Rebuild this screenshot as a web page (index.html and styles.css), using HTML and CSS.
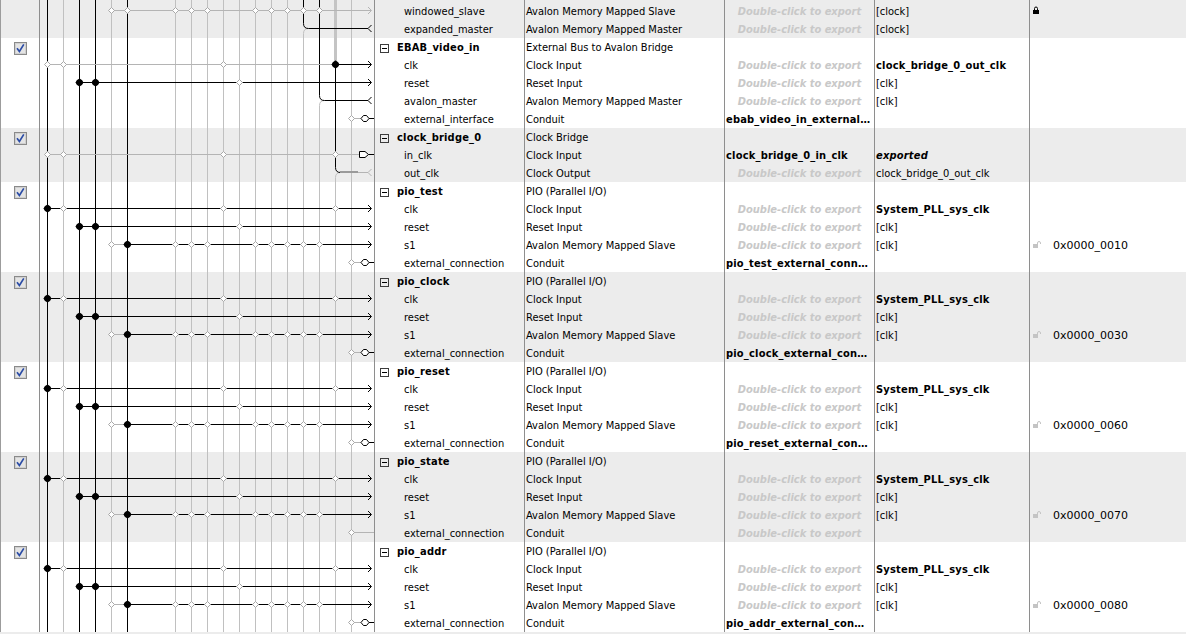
FILE: index.html
```html
<!DOCTYPE html>
<html>
<head>
<meta charset="utf-8">
<link rel="stylesheet" href="styles.css">
</head>
<body>
<div class="table">
  <div class="row g top"><div class="c chk"></div><div class="c conn"></div><div class="c name"></div><div class="c desc"></div><div class="c exp"></div><div class="c clk"></div><div class="c base"></div></div>

  <div class="row g"><div class="c chk"></div><div class="c conn"></div><div class="c name"><span class="sub">windowed_slave</span></div><div class="c desc">Avalon Memory Mapped Slave</div><div class="c exp"><span class="dce">Double-click to export</span></div><div class="c clk">[clock]</div><div class="c base"><svg class="lock" width="8" height="8" viewBox="0 0 8 8"><path d="M1.5,4 V2.5 A1.5,1.5 0 0 1 4.5,2.5 V4" fill="none" stroke="#000"/><rect x="0" y="4" width="6" height="4" fill="#000"/></svg></div></div>
  <div class="row g"><div class="c chk"></div><div class="c conn"></div><div class="c name"><span class="sub">expanded_master</span></div><div class="c desc">Avalon Memory Mapped Master</div><div class="c exp"><span class="dce">Double-click to export</span></div><div class="c clk">[clock]</div><div class="c base"></div></div>

  <div class="row"><div class="c chk"><svg class="cb" width="13" height="13" viewBox="0 0 13 13"><rect x="0.5" y="0.5" width="12" height="12" fill="#fff" stroke="#8a8a8a"/><rect x="1.5" y="1.5" width="10" height="10" fill="#e4e4e4" stroke="#d0d0d0"/><path d="M3,6.3 L5.4,9.4 L9.8,2.4" fill="none" stroke="#2b4ca6" stroke-width="1.7"/></svg></div><div class="c conn"></div><div class="c name"><span class="tog"></span><b>EBAB_video_in</b></div><div class="c desc">External Bus to Avalon Bridge</div><div class="c exp"></div><div class="c clk"></div><div class="c base"></div></div>
  <div class="row"><div class="c chk"></div><div class="c conn"></div><div class="c name"><span class="sub">clk</span></div><div class="c desc">Clock Input</div><div class="c exp"><span class="dce">Double-click to export</span></div><div class="c clk"><b>clock_bridge_0_out_clk</b></div><div class="c base"></div></div>
  <div class="row"><div class="c chk"></div><div class="c conn"></div><div class="c name"><span class="sub">reset</span></div><div class="c desc">Reset Input</div><div class="c exp"><span class="dce">Double-click to export</span></div><div class="c clk">[clk]</div><div class="c base"></div></div>
  <div class="row"><div class="c chk"></div><div class="c conn"></div><div class="c name"><span class="sub">avalon_master</span></div><div class="c desc">Avalon Memory Mapped Master</div><div class="c exp"><span class="dce">Double-click to export</span></div><div class="c clk">[clk]</div><div class="c base"></div></div>
  <div class="row"><div class="c chk"></div><div class="c conn"></div><div class="c name"><span class="sub">external_interface</span></div><div class="c desc">Conduit</div><div class="c exp"><b>ebab_video_in_external…</b></div><div class="c clk"></div><div class="c base"></div></div>

  <div class="row g"><div class="c chk"><svg class="cb" width="13" height="13" viewBox="0 0 13 13"><rect x="0.5" y="0.5" width="12" height="12" fill="#fff" stroke="#8a8a8a"/><rect x="1.5" y="1.5" width="10" height="10" fill="#e4e4e4" stroke="#d0d0d0"/><path d="M3,6.3 L5.4,9.4 L9.8,2.4" fill="none" stroke="#2b4ca6" stroke-width="1.7"/></svg></div><div class="c conn"></div><div class="c name"><span class="tog"></span><b>clock_bridge_0</b></div><div class="c desc">Clock Bridge</div><div class="c exp"></div><div class="c clk"></div><div class="c base"></div></div>
  <div class="row g"><div class="c chk"></div><div class="c conn"></div><div class="c name"><span class="sub">in_clk</span></div><div class="c desc">Clock Input</div><div class="c exp"><b>clock_bridge_0_in_clk</b></div><div class="c clk"><b><i>exported</i></b></div><div class="c base"></div></div>
  <div class="row g"><div class="c chk"></div><div class="c conn"></div><div class="c name"><span class="sub">out_clk</span></div><div class="c desc">Clock Output</div><div class="c exp"><span class="dce">Double-click to export</span></div><div class="c clk">clock_bridge_0_out_clk</div><div class="c base"></div></div>

  <div class="row"><div class="c chk"><svg class="cb" width="13" height="13" viewBox="0 0 13 13"><rect x="0.5" y="0.5" width="12" height="12" fill="#fff" stroke="#8a8a8a"/><rect x="1.5" y="1.5" width="10" height="10" fill="#e4e4e4" stroke="#d0d0d0"/><path d="M3,6.3 L5.4,9.4 L9.8,2.4" fill="none" stroke="#2b4ca6" stroke-width="1.7"/></svg></div><div class="c conn"></div><div class="c name"><span class="tog"></span><b>pio_test</b></div><div class="c desc">PIO (Parallel I/O)</div><div class="c exp"></div><div class="c clk"></div><div class="c base"></div></div>
  <div class="row"><div class="c chk"></div><div class="c conn"></div><div class="c name"><span class="sub">clk</span></div><div class="c desc">Clock Input</div><div class="c exp"><span class="dce">Double-click to export</span></div><div class="c clk"><b>System_PLL_sys_clk</b></div><div class="c base"></div></div>
  <div class="row"><div class="c chk"></div><div class="c conn"></div><div class="c name"><span class="sub">reset</span></div><div class="c desc">Reset Input</div><div class="c exp"><span class="dce">Double-click to export</span></div><div class="c clk">[clk]</div><div class="c base"></div></div>
  <div class="row"><div class="c chk"></div><div class="c conn"></div><div class="c name"><span class="sub">s1</span></div><div class="c desc">Avalon Memory Mapped Slave</div><div class="c exp"><span class="dce">Double-click to export</span></div><div class="c clk">[clk]</div><div class="c base"><svg class="ulock" width="8" height="7" viewBox="0 0 8 7"><path d="M4.5,3.5 V2 A1.5,1.5 0 0 1 7.5,2 V3" fill="none" stroke="#c4c4c4"/><rect x="0" y="3" width="5" height="4" fill="#c4c4c4"/></svg><span class="addr">0x0000_0010</span></div></div>
  <div class="row"><div class="c chk"></div><div class="c conn"></div><div class="c name"><span class="sub">external_connection</span></div><div class="c desc">Conduit</div><div class="c exp"><b>pio_test_external_conn…</b></div><div class="c clk"></div><div class="c base"></div></div>

  <div class="row g"><div class="c chk"><svg class="cb" width="13" height="13" viewBox="0 0 13 13"><rect x="0.5" y="0.5" width="12" height="12" fill="#fff" stroke="#8a8a8a"/><rect x="1.5" y="1.5" width="10" height="10" fill="#e4e4e4" stroke="#d0d0d0"/><path d="M3,6.3 L5.4,9.4 L9.8,2.4" fill="none" stroke="#2b4ca6" stroke-width="1.7"/></svg></div><div class="c conn"></div><div class="c name"><span class="tog"></span><b>pio_clock</b></div><div class="c desc">PIO (Parallel I/O)</div><div class="c exp"></div><div class="c clk"></div><div class="c base"></div></div>
  <div class="row g"><div class="c chk"></div><div class="c conn"></div><div class="c name"><span class="sub">clk</span></div><div class="c desc">Clock Input</div><div class="c exp"><span class="dce">Double-click to export</span></div><div class="c clk"><b>System_PLL_sys_clk</b></div><div class="c base"></div></div>
  <div class="row g"><div class="c chk"></div><div class="c conn"></div><div class="c name"><span class="sub">reset</span></div><div class="c desc">Reset Input</div><div class="c exp"><span class="dce">Double-click to export</span></div><div class="c clk">[clk]</div><div class="c base"></div></div>
  <div class="row g"><div class="c chk"></div><div class="c conn"></div><div class="c name"><span class="sub">s1</span></div><div class="c desc">Avalon Memory Mapped Slave</div><div class="c exp"><span class="dce">Double-click to export</span></div><div class="c clk">[clk]</div><div class="c base"><svg class="ulock" width="8" height="7" viewBox="0 0 8 7"><path d="M4.5,3.5 V2 A1.5,1.5 0 0 1 7.5,2 V3" fill="none" stroke="#c4c4c4"/><rect x="0" y="3" width="5" height="4" fill="#c4c4c4"/></svg><span class="addr">0x0000_0030</span></div></div>
  <div class="row g"><div class="c chk"></div><div class="c conn"></div><div class="c name"><span class="sub">external_connection</span></div><div class="c desc">Conduit</div><div class="c exp"><b>pio_clock_external_con…</b></div><div class="c clk"></div><div class="c base"></div></div>

  <div class="row"><div class="c chk"><svg class="cb" width="13" height="13" viewBox="0 0 13 13"><rect x="0.5" y="0.5" width="12" height="12" fill="#fff" stroke="#8a8a8a"/><rect x="1.5" y="1.5" width="10" height="10" fill="#e4e4e4" stroke="#d0d0d0"/><path d="M3,6.3 L5.4,9.4 L9.8,2.4" fill="none" stroke="#2b4ca6" stroke-width="1.7"/></svg></div><div class="c conn"></div><div class="c name"><span class="tog"></span><b>pio_reset</b></div><div class="c desc">PIO (Parallel I/O)</div><div class="c exp"></div><div class="c clk"></div><div class="c base"></div></div>
  <div class="row"><div class="c chk"></div><div class="c conn"></div><div class="c name"><span class="sub">clk</span></div><div class="c desc">Clock Input</div><div class="c exp"><span class="dce">Double-click to export</span></div><div class="c clk"><b>System_PLL_sys_clk</b></div><div class="c base"></div></div>
  <div class="row"><div class="c chk"></div><div class="c conn"></div><div class="c name"><span class="sub">reset</span></div><div class="c desc">Reset Input</div><div class="c exp"><span class="dce">Double-click to export</span></div><div class="c clk">[clk]</div><div class="c base"></div></div>
  <div class="row"><div class="c chk"></div><div class="c conn"></div><div class="c name"><span class="sub">s1</span></div><div class="c desc">Avalon Memory Mapped Slave</div><div class="c exp"><span class="dce">Double-click to export</span></div><div class="c clk">[clk]</div><div class="c base"><svg class="ulock" width="8" height="7" viewBox="0 0 8 7"><path d="M4.5,3.5 V2 A1.5,1.5 0 0 1 7.5,2 V3" fill="none" stroke="#c4c4c4"/><rect x="0" y="3" width="5" height="4" fill="#c4c4c4"/></svg><span class="addr">0x0000_0060</span></div></div>
  <div class="row"><div class="c chk"></div><div class="c conn"></div><div class="c name"><span class="sub">external_connection</span></div><div class="c desc">Conduit</div><div class="c exp"><b>pio_reset_external_con…</b></div><div class="c clk"></div><div class="c base"></div></div>

  <div class="row g"><div class="c chk"><svg class="cb" width="13" height="13" viewBox="0 0 13 13"><rect x="0.5" y="0.5" width="12" height="12" fill="#fff" stroke="#8a8a8a"/><rect x="1.5" y="1.5" width="10" height="10" fill="#e4e4e4" stroke="#d0d0d0"/><path d="M3,6.3 L5.4,9.4 L9.8,2.4" fill="none" stroke="#2b4ca6" stroke-width="1.7"/></svg></div><div class="c conn"></div><div class="c name"><span class="tog"></span><b>pio_state</b></div><div class="c desc">PIO (Parallel I/O)</div><div class="c exp"></div><div class="c clk"></div><div class="c base"></div></div>
  <div class="row g"><div class="c chk"></div><div class="c conn"></div><div class="c name"><span class="sub">clk</span></div><div class="c desc">Clock Input</div><div class="c exp"><span class="dce">Double-click to export</span></div><div class="c clk"><b>System_PLL_sys_clk</b></div><div class="c base"></div></div>
  <div class="row g"><div class="c chk"></div><div class="c conn"></div><div class="c name"><span class="sub">reset</span></div><div class="c desc">Reset Input</div><div class="c exp"><span class="dce">Double-click to export</span></div><div class="c clk">[clk]</div><div class="c base"></div></div>
  <div class="row g"><div class="c chk"></div><div class="c conn"></div><div class="c name"><span class="sub">s1</span></div><div class="c desc">Avalon Memory Mapped Slave</div><div class="c exp"><span class="dce">Double-click to export</span></div><div class="c clk">[clk]</div><div class="c base"><svg class="ulock" width="8" height="7" viewBox="0 0 8 7"><path d="M4.5,3.5 V2 A1.5,1.5 0 0 1 7.5,2 V3" fill="none" stroke="#c4c4c4"/><rect x="0" y="3" width="5" height="4" fill="#c4c4c4"/></svg><span class="addr">0x0000_0070</span></div></div>
  <div class="row g"><div class="c chk"></div><div class="c conn"></div><div class="c name"><span class="sub">external_connection</span></div><div class="c desc">Conduit</div><div class="c exp"><span class="dce">Double-click to export</span></div><div class="c clk"></div><div class="c base"></div></div>

  <div class="row"><div class="c chk"><svg class="cb" width="13" height="13" viewBox="0 0 13 13"><rect x="0.5" y="0.5" width="12" height="12" fill="#fff" stroke="#8a8a8a"/><rect x="1.5" y="1.5" width="10" height="10" fill="#e4e4e4" stroke="#d0d0d0"/><path d="M3,6.3 L5.4,9.4 L9.8,2.4" fill="none" stroke="#2b4ca6" stroke-width="1.7"/></svg></div><div class="c conn"></div><div class="c name"><span class="tog"></span><b>pio_addr</b></div><div class="c desc">PIO (Parallel I/O)</div><div class="c exp"></div><div class="c clk"></div><div class="c base"></div></div>
  <div class="row"><div class="c chk"></div><div class="c conn"></div><div class="c name"><span class="sub">clk</span></div><div class="c desc">Clock Input</div><div class="c exp"><span class="dce">Double-click to export</span></div><div class="c clk"><b>System_PLL_sys_clk</b></div><div class="c base"></div></div>
  <div class="row"><div class="c chk"></div><div class="c conn"></div><div class="c name"><span class="sub">reset</span></div><div class="c desc">Reset Input</div><div class="c exp"><span class="dce">Double-click to export</span></div><div class="c clk">[clk]</div><div class="c base"></div></div>
  <div class="row"><div class="c chk"></div><div class="c conn"></div><div class="c name"><span class="sub">s1</span></div><div class="c desc">Avalon Memory Mapped Slave</div><div class="c exp"><span class="dce">Double-click to export</span></div><div class="c clk">[clk]</div><div class="c base"><svg class="ulock" width="8" height="7" viewBox="0 0 8 7"><path d="M4.5,3.5 V2 A1.5,1.5 0 0 1 7.5,2 V3" fill="none" stroke="#c4c4c4"/><rect x="0" y="3" width="5" height="4" fill="#c4c4c4"/></svg><span class="addr">0x0000_0080</span></div></div>
  <div class="row"><div class="c chk"></div><div class="c conn"></div><div class="c name"><span class="sub">external_connection</span></div><div class="c desc">Conduit</div><div class="c exp"><b>pio_addr_external_con…</b></div><div class="c clk"></div><div class="c base"></div></div>

  <div class="row g bottom"></div>

  <svg class="wires" width="1186" height="632" viewBox="0 0 1186 632">
    <defs>
      <path id="hd" d="M0,-3L3,0L0,3L-3,0Z" fill="#fff" stroke="#a8a8a8"/>
      <g id="bd"><path d="M0,-4.2L4.2,0L0,4.2L-4.2,0Z" fill="#000"/><circle r="3.3" fill="#000"/></g>
      <path id="ra" d="M-3.5,-3.5L0,0L-3.5,3.5" fill="none"/>
      <path id="la" d="M3.5,-3.5L0,0L3.5,3.5" fill="none"/>
      <g id="cond"><path d="M351.5,0H361" stroke="#b4b4b4"/><path d="M361,0L363.5,-3H366.5L369,0L366.5,3H363.5Z" fill="#fff" stroke="#000"/><path d="M369,0H374" stroke="#000"/><use href="#hd" x="351.5" y="0"/></g>
      <g id="clkrow"><path d="M47.5,0H371" stroke="#000"/><use href="#ra" x="371.5" y="0" stroke="#000"/><use href="#bd" x="47.5" y="0"/><use href="#hd" x="63.5" y="0"/><use href="#hd" x="223.5" y="0"/><use href="#hd" x="335.5" y="0"/></g>
      <g id="rstrow"><path d="M79.5,0H371" stroke="#000"/><use href="#ra" x="371.5" y="0" stroke="#000"/><use href="#bd" x="79.5" y="0"/><use href="#bd" x="95.5" y="0"/><use href="#hd" x="239.5" y="0"/></g>
      <g id="s1row"><path d="M111.5,0H127.5" stroke="#b4b4b4"/><path d="M127.5,0H371" stroke="#000"/><use href="#ra" x="371.5" y="0" stroke="#000"/><use href="#hd" x="111.5" y="0"/><use href="#bd" x="127.5" y="0"/><use href="#hd" x="175.5" y="0"/><use href="#hd" x="191.5" y="0"/><use href="#hd" x="207.5" y="0"/><use href="#hd" x="255.5" y="0"/><use href="#hd" x="271.5" y="0"/><use href="#hd" x="287.5" y="0"/><use href="#hd" x="303.5" y="0"/><use href="#hd" x="319.5" y="0"/></g>
    </defs>

    <g stroke="#c0c0c0" fill="none">
      <path d="M63.5,0V632M111.5,0V632M175.5,0V632M191.5,0V632M207.5,0V632M223.5,0V632M239.5,0V632M255.5,0V632M271.5,0V632M287.5,0V632M351.5,0V632"/>
      <path d="M308.5,28.5Q303.5,28.5 303.5,33.5V632"/>
      <path d="M324.5,100.5Q319.5,100.5 319.5,105.5V632"/>
      <path d="M340.5,172.5Q335.5,172.5 335.5,177.5V632"/>
    </g>
    <rect x="334" y="0" width="3" height="64" fill="#c4c4c4"/>

    <g stroke="#000" fill="none">
      <path d="M47.5,0V632M79.5,0V632M95.5,0V632M127.5,0V632"/>
      <path d="M303.5,0V23.5Q303.5,28.5 308.5,28.5H368"/>
      <path d="M319.5,0V95.5Q319.5,100.5 324.5,100.5H368"/>
      <path d="M335.5,64.5V167.5Q335.5,172.5 340.5,172.5"/>
    </g>

    <!-- windowed_slave -->
    <path d="M111.5,10.5H371" stroke="#b4b4b4"/>
    <use href="#ra" x="371.5" y="10.5" stroke="#b4b4b4"/>
    <use href="#hd" x="111.5" y="10.5"/><use href="#hd" x="127.5" y="10.5"/><use href="#hd" x="175.5" y="10.5"/><use href="#hd" x="191.5" y="10.5"/><use href="#hd" x="207.5" y="10.5"/><use href="#hd" x="255.5" y="10.5"/><use href="#hd" x="271.5" y="10.5"/><use href="#hd" x="287.5" y="10.5"/><use href="#hd" x="303.5" y="10.5"/><use href="#hd" x="319.5" y="10.5"/>
    <!-- expanded_master -->
    <use href="#la" x="368" y="28.5" stroke="#000"/>
    <!-- EBAB clk -->
    <path d="M47.5,64.5H335.5" stroke="#b4b4b4"/>
    <path d="M335.5,64.5H371" stroke="#000"/>
    <use href="#ra" x="371.5" y="64.5" stroke="#000"/>
    <use href="#hd" x="47.5" y="64.5"/><use href="#hd" x="63.5" y="64.5"/><use href="#hd" x="223.5" y="64.5"/><use href="#bd" x="335.5" y="64.5"/>
    <!-- EBAB reset -->
    <use href="#rstrow" y="82.5"/>
    <!-- avalon_master -->
    <use href="#la" x="368" y="100.5" stroke="#000"/>
    <!-- external_interface -->
    <use href="#cond" y="118.5"/>
    <!-- in_clk -->
    <path d="M47.5,154.5H359.5" stroke="#b4b4b4"/>
    <use href="#hd" x="47.5" y="154.5"/><use href="#hd" x="63.5" y="154.5"/><use href="#hd" x="223.5" y="154.5"/><use href="#hd" x="335.5" y="154.5"/>
    <path d="M359.5,151.5H365L368.5,154.5L365,157.5H359.5Z" fill="#fff" stroke="#000"/>
    <path d="M368.5,154.5H374" stroke="#000"/>
    <!-- out_clk -->
    <path d="M340,172H358" stroke="#9a9a9a" stroke-width="2"/>
    <path d="M358,172.5H368" stroke="#b4b4b4"/>
    <use href="#la" x="368" y="172.5" stroke="#b4b4b4"/>

    <!-- pio_test -->
    <use href="#clkrow" y="208.5"/><use href="#rstrow" y="226.5"/><use href="#s1row" y="244.5"/><use href="#cond" y="262.5"/>
    <!-- pio_clock -->
    <use href="#clkrow" y="298.5"/><use href="#rstrow" y="316.5"/><use href="#s1row" y="334.5"/><use href="#cond" y="352.5"/>
    <!-- pio_reset -->
    <use href="#clkrow" y="388.5"/><use href="#rstrow" y="406.5"/><use href="#s1row" y="424.5"/><use href="#cond" y="442.5"/>
    <!-- pio_state -->
    <use href="#clkrow" y="478.5"/><use href="#rstrow" y="496.5"/><use href="#s1row" y="514.5"/>
    <path d="M351.5,532.5H374" stroke="#b4b4b4"/><use href="#hd" x="351.5" y="532.5"/>
    <!-- pio_addr -->
    <use href="#clkrow" y="568.5"/><use href="#rstrow" y="586.5"/><use href="#s1row" y="604.5"/><use href="#cond" y="622.5"/>
  </svg>
</div>
</body>
</html>
```

FILE: styles.css
```css
html, body {
  margin: 0;
  padding: 0;
  background: #fff;
}

body {
  font-family: "DejaVu Sans Condensed", "DejaVu Sans", sans-serif;
  font-stretch: condensed;
  font-size: 11px;
  color: #000;
}

.table {
  position: relative;
  width: 1186px;
  height: 634px;
  overflow: hidden;
}

.row {
  display: flex;
  height: 18px;
  line-height: 18px;
  background: #fff;
}

.row.g {
  background: #ececec;
}

.row.top {
  height: 2px;
}

.row.bottom {
  height: 2px;
}

.c {
  box-sizing: border-box;
  border-right: 1px solid #8e8e8e;
  white-space: nowrap;
  overflow: hidden;
  height: 100%;
  padding-top: 1px;
}

.c b {
  letter-spacing: 0.2px;
}

.chk {
  width: 40px;
  border-left: 1px solid #9c9c9c;
  padding: 4px 0 0 13px;
}

.cb {
  display: block;
}

.conn {
  width: 335px;
}

.name {
  width: 150px;
  padding-left: 5px;
  display: flex;
  align-items: flex-start;
}

.tog {
  box-sizing: border-box;
  width: 9px;
  height: 9px;
  border: 1px solid #3c3c3c;
  margin: 5px 8px 0 0;
  position: relative;
  flex: none;
}

.tog::after {
  content: "";
  position: absolute;
  left: 1px;
  right: 1px;
  top: 3px;
  height: 1px;
  background: #000;
}

.sub {
  padding-left: 24px;
}

.desc {
  width: 200px;
  padding-left: 1px;
}

.exp {
  width: 150px;
  padding-left: 1px;
}

.dce {
  display: block;
  text-align: center;
  color: #c8c8c8;
  font-style: italic;
  font-weight: bold;
  padding-right: 1px;
}

.clk {
  width: 155px;
  padding-left: 1px;
}

.base {
  flex: 1;
  border-right: none;
  padding-left: 3px;
  padding-top: 0;
  display: flex;
  align-items: center;
}

.lock {
  display: block;
  margin-top: -2px;
}

.ulock {
  display: block;
  margin-top: -1px;
}

.addr {
  margin-left: 12px;
  padding-top: 2px;
  font-family: "DejaVu Sans", sans-serif;
  font-stretch: normal;
}

.wires {
  position: absolute;
  left: 0;
  top: 0;
  pointer-events: none;
}
```
